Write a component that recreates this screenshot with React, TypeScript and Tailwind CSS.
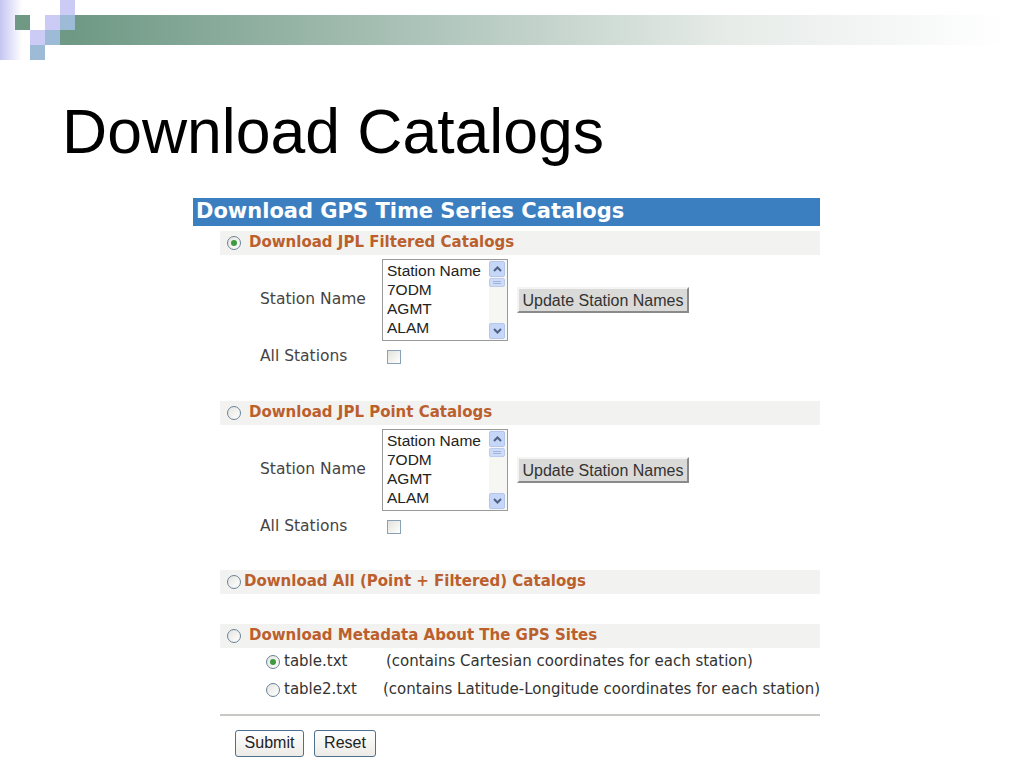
import React from 'react'

const verdana = "font-['DejaVu_Sans',Verdana,sans-serif]"
const arial = "font-['Liberation_Sans',Arial,sans-serif]"

function SlideHeader() {
  return (
    <svg width="1024" height="60" className="block">
      <defs>
        <linearGradient id="bar" x1="0" x2="1" y1="0" y2="0">
          <stop offset="0" stopColor="#6f9985" />
          <stop offset="0.35" stopColor="#a9c1b6" />
          <stop offset="0.7" stopColor="#e6ebe8" />
          <stop offset="1" stopColor="#ffffff" />
        </linearGradient>
        <linearGradient id="strip" x1="0" x2="1" y1="0" y2="0">
          <stop offset="0" stopColor="#c5c5f3" />
          <stop offset="1" stopColor="#ffffff" />
        </linearGradient>
      </defs>
      <rect x="0" y="0" width="22" height="60" fill="url(#strip)" />
      <rect x="75" y="15" width="930" height="30" fill="url(#bar)" />
      <rect x="15" y="15" width="15" height="15" fill="#6f9985" />
      <rect x="30" y="30" width="15" height="15" fill="#cbcbf5" />
      <rect x="30" y="45" width="15" height="15" fill="#9dbbd6" />
      <rect x="45" y="15" width="15" height="15" fill="#cbcbf5" />
      <rect x="45" y="30" width="15" height="15" fill="#9dbbd6" />
      <rect x="60" y="0" width="15" height="15" fill="#cbcbf5" />
      <rect x="60" y="15" width="15" height="15" fill="#9dbbd6" />
      <rect x="60" y="30" width="15" height="15" fill="#6f9985" />
    </svg>
  )
}

function Radio({ checked = false }: { checked?: boolean }) {
  return (
    <span className="w-[14px] h-[14px] rounded-full border border-[#6b8397] bg-gradient-to-br from-[#e4e4e0] to-white flex items-center justify-center shrink-0">
      {checked && <span className="w-[6px] h-[6px] rounded-full bg-[#3f9a3f]" />}
    </span>
  )
}

function SectionRow({ label, checked = false, tight = false }: { label: string; checked?: boolean; tight?: boolean }) {
  return (
    <div className="h-[24px] bg-[#f2f2f1] flex items-center pl-[7px]">
      <Radio checked={checked} />
      <span className={`${verdana} font-bold text-[15px] text-[#bb5f2d] ${tight ? 'ml-[3px]' : 'ml-[8px]'}`}>{label}</span>
    </div>
  )
}

function ScrollArrow({ up }: { up?: boolean }) {
  return (
    <div className="w-[16px] h-[16px] rounded-[2px] bg-[#c6d6f7] border border-[#b4c6ee] flex items-center justify-center">
      <svg width="9" height="6" viewBox="0 0 9 6">
        <path d={up ? 'M1 5 L4.5 1.5 L8 5' : 'M1 1 L4.5 4.5 L8 1'} fill="none" stroke="#4d6185" strokeWidth="2" />
      </svg>
    </div>
  )
}

function StationList() {
  return (
    <div className="w-[126px] h-[82px] border border-[#9a9a9a] bg-white flex">
      <div className={`${arial} flex-1 pl-[4px] pt-[1px] text-[15.5px] leading-[19px] text-[#222] whitespace-nowrap overflow-hidden`}>
        <div>Station Name</div>
        <div>7ODM</div>
        <div>AGMT</div>
        <div>ALAM</div>
      </div>
      <div className="w-[18px] bg-[#f6f6f3] flex flex-col justify-between py-[1px] pr-[1px]">
        <div>
          <ScrollArrow up />
          <div className="w-[16px] h-[9px] mt-[1px] rounded-[2px] bg-[#cfdcf8] border border-[#bccbee] flex flex-col justify-center gap-[1px] px-[3px]">
            <div className="h-px bg-[#9fb3dd]" />
            <div className="h-px bg-[#9fb3dd]" />
          </div>
        </div>
        <ScrollArrow />
      </div>
    </div>
  )
}

function StationBlock() {
  return (
    <>
      <div className="mt-[4px] flex items-center pl-[40px]">
        <span className={`${verdana} w-[122px] text-[15.5px] text-[#444]`}>Station Name</span>
        <StationList />
        <button className={`${arial} ml-[9px] h-[26px] w-[172px] bg-[#dadad8] border-2 border-t-[#f4f4f4] border-l-[#f4f4f4] border-b-[#8a8a8a] border-r-[#8a8a8a] text-[16px] text-[#333] whitespace-nowrap`}>
          Update Station Names
        </button>
      </div>
      <div className="mt-[5px] h-[22px] flex items-center pl-[40px]">
        <span className={`${verdana} w-[122px] text-[15.5px] text-[#444]`}>All Stations</span>
        <span className="ml-[5px] w-[14px] h-[14px] border border-[#8aa0b5] bg-gradient-to-br from-[#e2e2dc] to-white" />
      </div>
    </>
  )
}

function FileRow({ name, desc, checked = false }: { name: string; desc: string; checked?: boolean }) {
  return (
    <div className={`${verdana} h-[28px] flex items-center pl-[46px] text-[15px] text-[#333]`}>
      <Radio checked={checked} />
      <span className="ml-[4px] w-[102px]">{name}</span>
      <span className="whitespace-nowrap">{desc}</span>
    </div>
  )
}

export default function App() {
  return (
    <div className="w-[1024px] h-[768px] bg-white overflow-hidden">
      <SlideHeader />
      <h1 className={`${arial} mt-[40px] pl-[62px] text-[62.5px] leading-none text-black`}>Download Catalogs</h1>

      <div className="mt-[35px] ml-[193px] w-[627px]">
        <div className={`${verdana} h-[28px] bg-[#3c7fc1] pl-[3px] flex items-center text-[21px] font-bold text-white whitespace-nowrap`}>
          Download GPS Time Series Catalogs
        </div>

        <div className="ml-[27px] w-[600px]">
          <div className="mt-[5px]">
            <SectionRow label="Download JPL Filtered Catalogs" checked />
          </div>
          <StationBlock />

          <div className="mt-[33px]">
            <SectionRow label="Download JPL Point Catalogs" />
          </div>
          <StationBlock />

          <div className="mt-[32px]">
            <SectionRow label="Download All (Point + Filtered) Catalogs" tight />
          </div>

          <div className="mt-[30px]">
            <SectionRow label="Download Metadata About The GPS Sites" />
          </div>
          <FileRow name="table.txt" desc="(contains Cartesian coordinates for each station)" checked />
          <FileRow name="table2.txt" desc="(contains Latitude-Longitude coordinates for each station)" />

          <div className="mt-[10px] h-[2px] bg-[#c8c8c4]" />

          <div className={`${arial} mt-[14px] ml-[15px] flex gap-[10px] text-[16px] text-[#222]`}>
            <button className="h-[27px] w-[69px] rounded-[3px] border border-[#4f6f8f] bg-gradient-to-b from-white to-[#ecebe6]">Submit</button>
            <button className="h-[27px] w-[62px] rounded-[3px] border border-[#4f6f8f] bg-gradient-to-b from-white to-[#ecebe6]">Reset</button>
          </div>
        </div>
      </div>
    </div>
  )
}
